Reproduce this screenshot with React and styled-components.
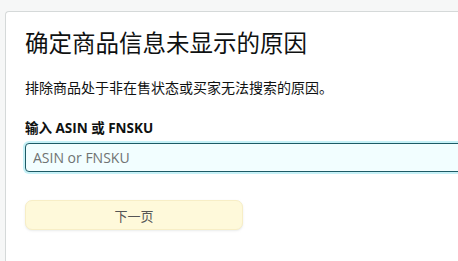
import React from "react";
import styled, { createGlobalStyle } from "styled-components";

const GlobalStyle = createGlobalStyle`
  html, body {
    margin: 0;
    padding: 0;
    background: #f6f7f7;
    font-family: "Noto Sans", "Noto Sans CJK SC", sans-serif;
    overflow: hidden;
  }
`;

const Page = styled.div`
  padding: 11px 0 0 5px;
  width: 458px;
  height: 261px;
  box-sizing: border-box;
`;

const Card = styled.div`
  background: #fff;
  border: 1px solid #d5d9d9;
  border-right: none;
  border-bottom: none;
  border-radius: 4px 0 0 0;
  height: 100%;
  padding: 12px 0 0 19px;
  box-sizing: border-box;
  overflow: hidden;
`;

const Title = styled.h1`
  margin: 0;
  font-family: "Noto Sans CJK SC", sans-serif;
  font-size: 23.5px;
  font-weight: 400;
  line-height: 36px;
  color: #0f1111;
`;

const Desc = styled.p`
  margin: 17px 0 0;
  font-family: "Noto Sans CJK SC", sans-serif;
  font-size: 14px;
  line-height: 20px;
  color: #0f1111;
`;

const Label = styled.label`
  display: block;
  margin-top: 21px;
  font-family: "Open Sans", "Noto Sans CJK SC", sans-serif;
  font-size: 13.5px;
  font-weight: 700;
  line-height: 20px;
  color: #0f1111;
`;

const Input = styled.input`
  display: block;
  margin-top: 5px;
  width: calc(100% + 20px);
  height: 29px;
  box-sizing: border-box;
  padding: 0 7px;
  border: 1px solid #1d5b66;
  border-radius: 4px;
  background: #f2feff;
  box-shadow: 0 0 0 2px #c6f1f7;
  font-family: "Open Sans", sans-serif;
  font-size: 14px;
  color: #0f1111;
  outline: none;
  &::placeholder {
    color: #6f7373;
  }
`;

const NextButton = styled.button`
  display: block;
  margin-top: 28px;
  width: 218px;
  height: 30px;
  border: 1px solid #f7eec6;
  border-radius: 7px;
  background: #fef9da;
  box-shadow: 0 1px 2px rgba(213, 217, 217, 0.5);
  font-family: "Noto Sans CJK SC", sans-serif;
  font-size: 13px;
  color: #555;
`;

export default function App() {
  return (
    <>
      <GlobalStyle />
      <Page>
        <Card>
          <Title>确定商品信息未显示的原因</Title>
          <Desc>排除商品处于非在售状态或买家无法搜索的原因。</Desc>
          <Label>输入 ASIN 或 FNSKU</Label>
          <Input placeholder="ASIN or FNSKU" />
          <NextButton>下一页</NextButton>
        </Card>
      </Page>
    </>
  );
}
